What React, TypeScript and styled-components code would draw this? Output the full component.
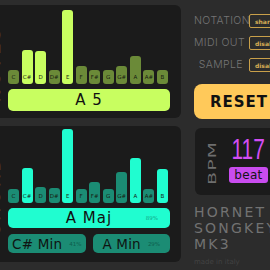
import React from "react";
import styled, { createGlobalStyle } from "styled-components";

const Global = createGlobalStyle`
  html, body { margin: 0; padding: 0; background: #2c2c2c; overflow: hidden; }
  #root { width: 270px; height: 270px; overflow: hidden; }
`;

type Tone = "lime" | "teal";

const palette = {
  lime: { on: "#c8fe60", off: "#6b8a38", label: "#c8fe60", pct: "#7aa03a" },
  teal: { on: "#20fdd0", off: "#1b8c74", label: "#20fdd0", pct: "#12a987" },
};

const Page = styled.div`
  width: 270px;
  height: 270px;
  overflow: hidden;
  background: #2c2c2c;
  font-family: "DejaVu Sans", "Liberation Sans", sans-serif;
`;

const Layout = styled.div`
  display: flex;
  gap: 13px;
  margin-left: -22px;
  padding-top: 5px;
  width: 420px;
`;

const LeftCol = styled.div`
  flex: none;
  width: 203px;
  display: flex;
  flex-direction: column;
  gap: 8px;
`;

const Panel = styled.section<{ $h: number; $pt: number }>`
  box-sizing: border-box;
  height: ${(p) => p.$h}px;
  padding-top: ${(p) => p.$pt}px;
  background: #1b1b1b;
  border-radius: 6px;
  display: flex;
`;

const SideCol = styled.div`
  flex: none;
  width: 30px;
  box-sizing: border-box;
  padding-right: 5px;
  display: flex;
  align-items: center;
  justify-content: flex-end;
`;

const SideLabel = styled.span`
  writing-mode: vertical-rl;
  transform: rotate(180deg);
  font-size: 18px;
  line-height: 1;
  letter-spacing: 3px;
  color: #8a8a8a;
`;

const Content = styled.div`
  width: 162px;
  display: flex;
  flex-direction: column;
`;

const Bars = styled.div`
  width: 160px;
  height: 74px;
  display: flex;
  justify-content: space-between;
  align-items: flex-end;
`;

const Bar = styled.div<{ $tone: Tone; $on: boolean }>`
  width: 11px;
  min-height: 14px;
  border-radius: 3px;
  background: ${(p) => (p.$on ? palette[p.$tone].on : palette[p.$tone].off)};
  display: flex;
  flex-direction: column;
  justify-content: flex-end;
`;

const BarText = styled.span`
  height: 14px;
  line-height: 14px;
  text-align: center;
  font-size: 5.5px;
  color: #161a10;
  white-space: nowrap;
`;

const MainLabel = styled.div<{ $tone: Tone; $h: number; $mt: number }>`
  position: relative;
  margin-top: ${(p) => p.$mt}px;
  height: ${(p) => p.$h}px;
  line-height: ${(p) => p.$h}px;
  border-radius: 5px;
  background: ${(p) => palette[p.$tone].label};
  color: #111;
  text-align: center;
  font-size: 15px;
  letter-spacing: 1px;
`;

const MainPct = styled.span<{ $tone: Tone }>`
  position: absolute;
  right: 12px;
  top: 0;
  font-size: 5.5px;
  letter-spacing: 0;
  color: ${(p) => palette[p.$tone].pct};
`;

const Alts = styled.div`
  margin-top: 6px;
  display: flex;
  gap: 7px;
`;

const Alt = styled.div`
  flex: 1;
  height: 19px;
  border-radius: 5px;
  background: #1b8c74;
  display: flex;
  align-items: center;
  justify-content: center;
  gap: 7px;
  color: #0f1412;
`;

const AltName = styled.span`
  font-size: 13.5px;
  letter-spacing: 0.2px;
`;

const AltPct = styled.span`
  font-size: 5.5px;
  color: #0e5e4d;
`;

const RightCol = styled.div`
  flex: none;
  width: 110px;
  display: flex;
  flex-direction: column;
`;

const Settings = styled.div`
  margin-top: 9px;
  display: flex;
  flex-direction: column;
  gap: 8px;
`;

const SettingRow = styled.div`
  display: grid;
  grid-template-columns: 49px 44px;
  column-gap: 6px;
  height: 14px;
`;

const SettingName = styled.span`
  text-align: right;
  font-family: "Inter", "DejaVu Sans", sans-serif;
  font-weight: 300;
  font-size: 10.5px;
  line-height: 14px;
  letter-spacing: 0.4px;
  color: #757575;
  white-space: nowrap;
`;

const SettingButton = styled.button`
  box-sizing: border-box;
  height: 14px;
  padding: 0 5px;
  border: 1px solid #c9a04a;
  border-radius: 2px;
  background: transparent;
  color: #d8ae55;
  font-family: "DejaVu Sans", sans-serif;
  font-size: 6px;
  font-weight: bold;
  text-align: left;
`;

const ResetButton = styled.button`
  margin-top: 12px;
  width: 89px;
  height: 35px;
  border: none;
  border-radius: 8px;
  background: #ffc95a;
  color: #111;
  font-family: "DejaVu Sans", sans-serif;
  font-weight: bold;
  font-size: 15px;
  letter-spacing: 1px;
  padding: 0 0 0 1px;
  text-align: center;
`;

const BpmPanel = styled.section`
  margin-top: 9px;
  margin-left: 1px;
  box-sizing: border-box;
  height: 67px;
  border-radius: 6px;
  background: #1b1b1b;
  display: flex;
  align-items: flex-start;
  padding-top: 6px;
`;

const BpmLabelCol = styled.div`
  width: 34px;
  height: 58px;
  display: flex;
  align-items: center;
  justify-content: center;
`;

const BpmLabel = styled.span`
  writing-mode: vertical-rl;
  transform: rotate(180deg) scaleX(0.55);
  font-size: 19px;
  line-height: 1;
  letter-spacing: 1px;
  color: #6e6e6e;
`;

const BpmValues = styled.div`
  width: 39px;
  display: flex;
  flex-direction: column;
  align-items: center;
`;

const BpmNumber = styled.span`
  display: inline-block;
  font-family: "Liberation Sans", sans-serif;
  font-size: 29px;
  line-height: 30px;
  color: #d34df3;
  transform: scaleX(0.72);
`;

const BeatButton = styled.button`
  margin-top: 3px;
  width: 39px;
  height: 16px;
  border: none;
  border-radius: 3px;
  background: #c94cef;
  color: #141414;
  font-family: "DejaVu Sans", sans-serif;
  font-size: 12px;
  line-height: 16px;
  letter-spacing: 0.3px;
  padding: 0;
`;

const Brand = styled.div`
  margin-top: 9px;
  font-size: 14px;
  line-height: 16px;
  letter-spacing: 2.2px;
  color: #727272;
  white-space: nowrap;
`;

const Made = styled.div`
  margin-top: 6px;
  font-size: 7px;
  color: #424242;
  white-space: nowrap;
`;

const NOTES = ["C", "C#", "D", "D#", "E", "F", "F#", "G", "G#", "A", "A#", "B"];

const topBars: [number, boolean][] = [
  [14, false], [34, true], [33, true], [14, false], [74, true], [18, false],
  [14, false], [14, false], [18, false], [28, false], [14, false], [14, false],
];

const bottomBars: [number, boolean][] = [
  [14, false], [35, true], [16, false], [15, false], [74, true], [14, false],
  [21, false], [13, false], [31, false], [45, true], [14, false], [34, true],
];

function BarRow({ data, tone }: { data: [number, boolean][]; tone: Tone }) {
  return (
    <Bars>
      {data.map(([h, on], i) => (
        <Bar key={NOTES[i]} $tone={tone} $on={on} style={{ height: h }}>
          <BarText>{NOTES[i]}</BarText>
        </Bar>
      ))}
    </Bars>
  );
}

const settings = [
  ["NOTATION", "sharp"],
  ["MIDI OUT", "disabled"],
  ["SAMPLE", "disabled"],
];

export default function App() {
  return (
    <Page>
      <Global />
      <Layout>
        <LeftCol>
          <Panel $h={113} $pt={5}>
            <SideCol>
              <SideLabel>NOTES</SideLabel>
            </SideCol>
            <Content>
              <BarRow data={topBars} tone="lime" />
              <MainLabel $tone="lime" $h={22} $mt={5}>
                A 5
              </MainLabel>
            </Content>
          </Panel>
          <Panel $h={136} $pt={3}>
            <SideCol>
              <SideLabel>CHORD</SideLabel>
            </SideCol>
            <Content>
              <BarRow data={bottomBars} tone="teal" />
              <MainLabel $tone="teal" $h={20} $mt={5}>
                A Maj
                <MainPct $tone="teal">89%</MainPct>
              </MainLabel>
              <Alts>
                <Alt>
                  <AltName>C# Min</AltName>
                  <AltPct>41%</AltPct>
                </Alt>
                <Alt>
                  <AltName>A Min</AltName>
                  <AltPct>29%</AltPct>
                </Alt>
              </Alts>
            </Content>
          </Panel>
        </LeftCol>
        <RightCol>
          <Settings>
            {settings.map(([name, value]) => (
              <SettingRow key={name}>
                <SettingName>{name}</SettingName>
                <SettingButton>{value}</SettingButton>
              </SettingRow>
            ))}
          </Settings>
          <ResetButton>RESET</ResetButton>
          <BpmPanel>
            <BpmLabelCol>
              <BpmLabel>BPM</BpmLabel>
            </BpmLabelCol>
            <BpmValues>
              <BpmNumber>117</BpmNumber>
              <BeatButton>beat</BeatButton>
            </BpmValues>
          </BpmPanel>
          <Brand>
            HORNET
            <br />
            SONGKEY
            <br />
            MK3
          </Brand>
          <Made>made in italy</Made>
        </RightCol>
      </Layout>
    </Page>
  );
}
